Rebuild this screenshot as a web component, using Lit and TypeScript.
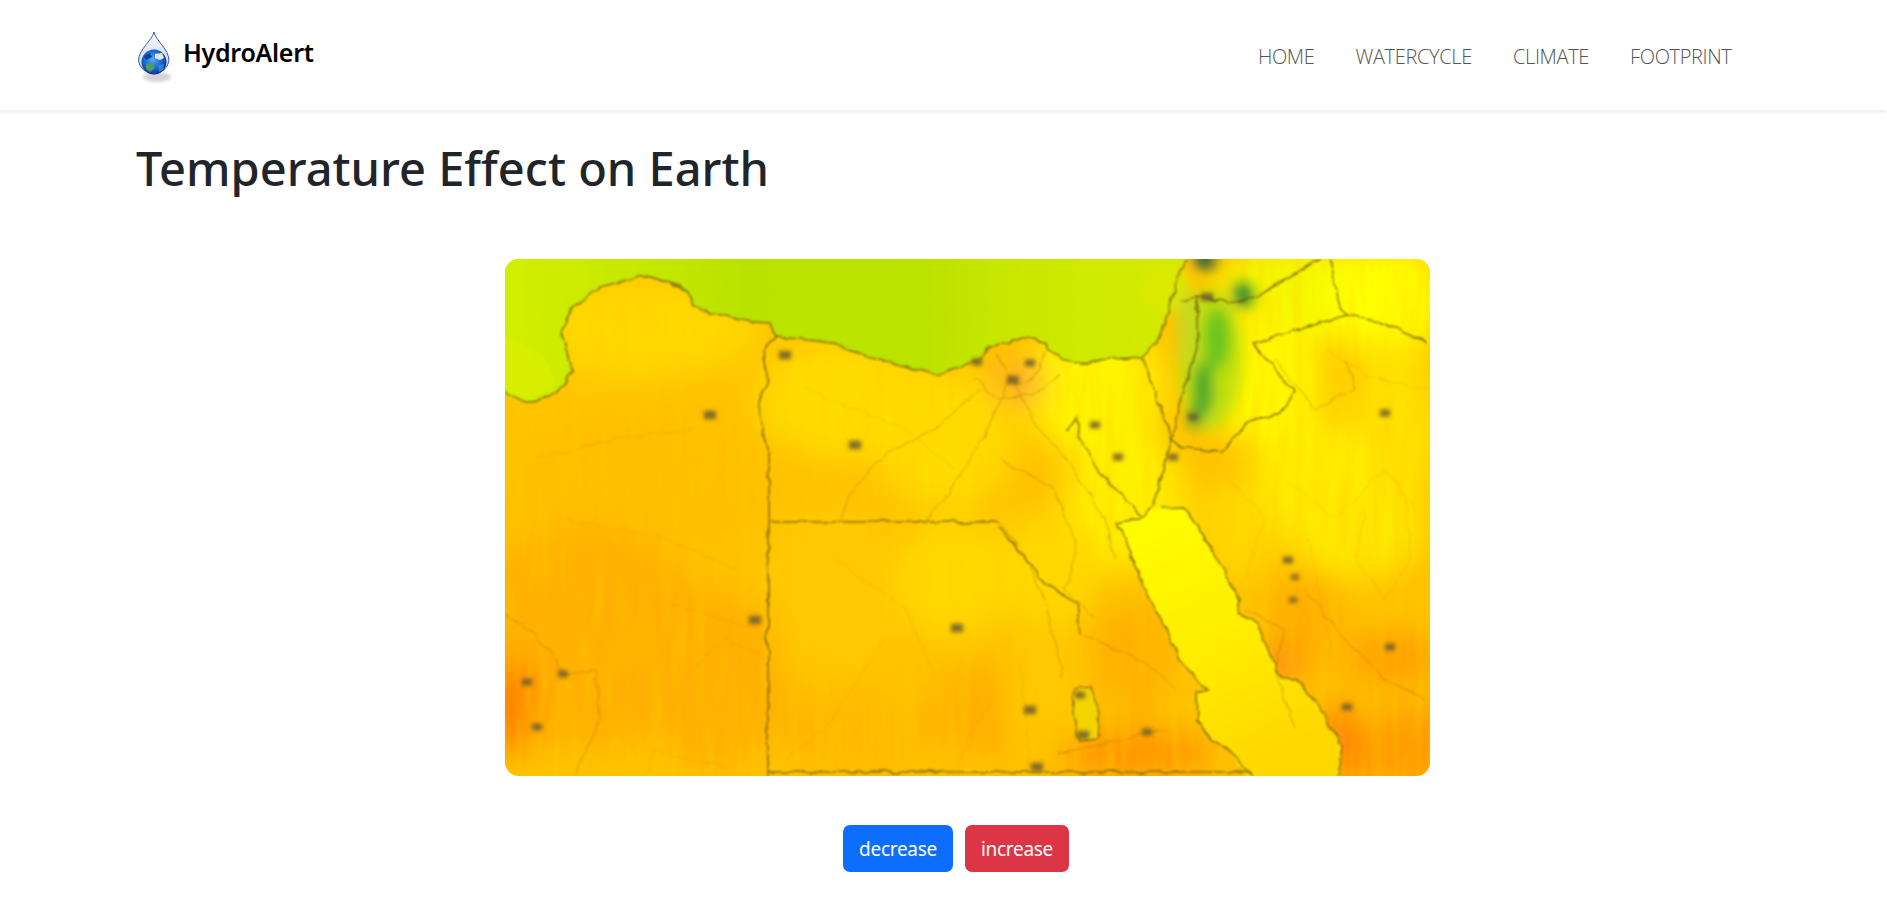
import { LitElement, html, css, svg } from 'lit';
import { customElement } from 'lit/decorators.js';

// soft colour patches of the temperature map: cx, cy, rx, ry, colour
const HEAT: [number, number, number, number, string][] = [
  [130, 70, 130, 50, '#ffd800'],
  [60, 150, 70, 40, '#ffc400'],
  [130, 230, 130, 70, '#ffbe00'],
  [80, 380, 130, 110, '#ffb000'],
  [210, 420, 70, 90, '#ffb000'],
  [340, 140, 90, 60, '#ffdc00'],
  [440, 180, 70, 70, '#ffdc00'],
  [330, 330, 70, 90, '#ffc800'],
  [450, 320, 60, 60, '#ffd800'],
  [350, 470, 90, 40, '#ffb800'],
  [480, 450, 50, 50, '#ffb000'],
  [590, 130, 70, 70, '#fff400'],
  [620, 240, 60, 70, '#fff000'],
  [545, 310, 50, 60, '#ffd800'],
  [540, 430, 40, 70, '#ffc800'],
  [625, 400, 40, 60, '#ffb000'],
  [630, 495, 80, 24, '#ff9400'],
  [800, 30, 90, 50, '#f4f800'],
  [880, 40, 60, 60, '#ffff00'],
  [760, 120, 60, 70, '#fff800'],
  [890, 170, 50, 90, '#ffe000'],
  [810, 220, 60, 60, '#ffee00'],
  [730, 270, 40, 50, '#ffd800'],
  [850, 270, 70, 50, '#ffe800'],
  [800, 360, 36, 50, '#ffac00'],
  [890, 400, 50, 28, '#ffa000'],
  [770, 410, 26, 26, '#ff9410'],
  [860, 490, 70, 36, '#ff9c00'],
  [835, 485, 12, 46, '#ff7a10'],
  [922, 490, 30, 50, '#ff9c00'],
  [515, 125, 26, 20, '#ffa030'],
  [8, 450, 22, 46, '#ff7a00'],
  [20, 420, 14, 16, '#ff8410'],
];

const GREENS: [number, number, number, number, string][] = [
  [705, 100, 32, 70, '#c0e010'],
  [712, 80, 13, 32, '#68c41e'],
  [698, 130, 10, 28, '#3ba52c'],
  [690, 158, 7, 12, '#4e9a34'],
  [738, 36, 10, 12, '#18803c'],
  [700, 1, 11, 9, '#03464e'],
  [660, 30, 26, 24, '#dce800'],
  [682, 70, 10, 40, '#c8d820'],
];

// coast and border lines, local to the 925x517 map
const BORDERS = [
  'M0 133 L14 140 28 143 52 134 67 114 63 94 57 71 68 48 95 28 122 21 138 16 162 23 185 34 188 48 208 54 245 63 265 64 270 78 295 80 328 84 362 98 395 106 432 116 452 108 475 101 482 89 508 81 528 79 542 86 558 101 575 106 592 101 638 98 652 84 662 58 675 11 682 0',
  'M270 78 L257 94 263 121 252 148 263 188 263 517',
  'M265 263 L494 263',
  'M263 513 L746 513',
  'M638 98 L667 181 648 248 638 258',
  'M692 38 L692 88 678 134 667 181 675 188 715 193 742 164 775 154 790 133 748 84 842 56 875 63 922 84',
  'M675 41 L692 38 732 44 758 34 815 0',
  'M825 0 L835 48 842 56',
  'M563 173 L572 158 575 178 598 218 638 258 612 264 628 301 635 321 662 371 675 401 702 431 692 434 693 461 705 481 722 488 748 517',
  'M655 249 L678 248 688 261 708 294 735 341 732 354 752 364 762 388 772 414 795 424 815 448 837 488 832 517',
  'M495 268 L545 328 572 344 575 374',
];

const RIVERS = [
  'M492 95 L510 125 528 120 542 90',
  'M470 118 L490 140 530 135 556 115',
  'M510 125 L530 165 560 200 575 220 600 260 610 300',
  'M475 130 L430 170 380 195 345 235 335 262',
  'M505 118 L480 175 440 240 420 262',
  'M495 200 L550 230 572 290 560 330 590 360',
  'M494 263 L520 295 540 340 558 420',
  'M0 355 L28 372 50 400 58 415 90 412 95 460 70 517',
  'M575 374 L642 404 672 431',
  'M552 495 L620 480 662 470',
  'M800 330 L840 380 880 420 920 440',
  'M740 350 L780 370 770 410 790 470',
  'M840 100 L850 130 810 150 770 100',
];

const CONTOURS = [
  'M30 200 L110 180 190 170',
  'M60 260 L160 280 230 310',
  'M150 340 L250 370',
  'M180 420 L220 380 260 400',
  'M140 517 L150 490 180 500 210 505 225 510',
  'M300 130 L400 170 450 210',
  'M330 300 L400 350 430 420',
  'M380 380 L320 470 280 500',
  'M450 517 L468 470 488 440',
  'M515 405 L520 450 524 510',
  'M780 220 L830 260 880 210 910 250',
  'M720 215 L760 260 740 320',
  'M820 90 L870 120 920 130',
  'M805 280 L815 340 828 400',
  'M900 240 L905 300 880 340 850 300 860 250',
];

const CITIES: [number, number, number][] = [
  [280, 96, 6], [205, 156, 6], [350, 186, 6], [472, 103, 5], [508, 121, 6], [525, 104, 5],
  [702, 38, 6], [590, 166, 5], [613, 198, 5], [668, 198, 5], [880, 154, 5], [688, 158, 5],
  [250, 361, 6], [452, 369, 6], [58, 415, 5], [22, 423, 5], [32, 468, 5], [783, 301, 5],
  [790, 318, 4], [788, 341, 4], [885, 388, 5], [842, 448, 5], [575, 436, 5], [525, 451, 6],
  [578, 476, 6], [642, 473, 5], [532, 508, 6],
];

@customElement('temp-map')
export class TempMap extends LitElement {
  static override styles = css`
    :host { display: block; width: 925px; height: 517px; }
    svg { display: block; border-radius: 14px; }
    .border { fill: none; stroke: #6a5a00; stroke-width: 1.5; stroke-linejoin: round; opacity: 0.8; }
    .river { fill: none; stroke: #a87400; stroke-width: 1; opacity: 0.55; }
    .contour { fill: none; stroke: #d88a00; stroke-width: 1; opacity: 0.28; }
    .lake { fill: #f4d400; stroke: #8a6a10; stroke-width: 1.4; }
    .city { fill: #6e5a30; opacity: 0.85; }
  `;

  private patch(items: [number, number, number, number, string][]) {
    return items.map(([cx, cy, rx, ry, c]) => svg`<ellipse cx=${cx} cy=${cy} rx=${rx} ry=${ry} fill=${c}></ellipse>`);
  }

  override render() {
    return html`<svg width="925" height="517" viewBox="0 0 925 517" role="img" aria-label="Temperature map">
      <defs>
        <filter id="wide" x="-20%" y="-20%" width="140%" height="140%"><feGaussianBlur stdDeviation="16"></feGaussianBlur></filter>
        <filter id="mid" x="-50%" y="-50%" width="200%" height="200%">
          <feGaussianBlur stdDeviation="7"></feGaussianBlur>
        </filter>
        <filter id="rough" x="0" y="0" width="100%" height="100%">
          <feTurbulence type="fractalNoise" baseFrequency="0.07" numOctaves="2" seed="4" result="n"></feTurbulence>
          <feDisplacementMap in="SourceGraphic" in2="n" scale="7" xChannelSelector="R" yChannelSelector="G"></feDisplacementMap>
          <feGaussianBlur stdDeviation="0.8"></feGaussianBlur>
        </filter>
        <filter id="streak" x="0" y="0" width="100%" height="100%">
          <feTurbulence type="fractalNoise" baseFrequency="0.09 0.012" numOctaves="2" seed="9"></feTurbulence>
          <feColorMatrix type="matrix" values="0 0 0 0 1  0 0 0 0 0.62  0 0 0 0 0  1.6 0 0 0 -0.62"></feColorMatrix>
        </filter>
        <filter id="dot" x="-100%" y="-100%" width="300%" height="300%"><feGaussianBlur stdDeviation="2"></feGaussianBlur></filter>
        <linearGradient id="sea" gradientUnits="userSpaceOnUse" x1="0" y1="0" x2="680" y2="0">
          <stop offset="0" stop-color="#d2ee00"></stop>
          <stop offset="0.2" stop-color="#c6e800"></stop>
          <stop offset="0.35" stop-color="#bae200"></stop>
          <stop offset="0.62" stop-color="#bce200"></stop>
          <stop offset="0.78" stop-color="#cde800"></stop>
          <stop offset="1" stop-color="#d4ea00"></stop>
        </linearGradient>
        <linearGradient id="red-sea" x1="0" y1="0" x2="0.4" y2="1">
          <stop offset="0" stop-color="#ffff00"></stop>
          <stop offset="0.5" stop-color="#fff000"></stop>
          <stop offset="1" stop-color="#ffd800"></stop>
        </linearGradient>
      </defs>
      <rect width="925" height="517" fill="#ffc200"></rect>
      <g filter="url(#wide)">${this.patch(HEAT)}</g>
      <rect width="925" height="517" filter="url(#streak)" opacity="0.45"></rect>
      <g filter="url(#rough)">
        <path fill="url(#sea)" d="M-10 -10 L690 -10 682 0 675 11 662 58 652 84 638 98 592 101 575 106 558 101 542 86 528 79 508 81 482 89 475 101 452 108 432 116 395 106 362 98 328 84 295 80 270 78 265 64 245 63 208 54 188 48 185 34 162 23 138 16 122 21 95 28 68 48 57 71 63 94 67 114 52 134 28 143 14 140 -10 133 Z"></path>
        <path fill="#dcf000" opacity="0.7" d="M-10 70 L40 100 50 125 25 138 -10 128 Z"></path>
        <path fill="url(#red-sea)" d="M638 258 L655 249 678 248 688 261 708 294 735 341 732 354 752 364 762 388 772 414 795 424 815 448 837 488 832 527 748 527 722 488 705 481 693 461 692 434 702 431 675 401 662 371 635 321 628 301 612 264 Z"></path>
        <path class="lake" d="M570 430 L586 428 594 450 592 480 574 482 568 455 Z"></path>
      </g>
      <g filter="url(#mid)">${this.patch(GREENS)}</g>
      <g filter="url(#rough)">
        ${CONTOURS.map((d) => svg`<path class="contour" d=${d}></path>`)}
        ${RIVERS.map((d) => svg`<path class="river" d=${d}></path>`)}
        ${BORDERS.map((d) => svg`<path class="border" d=${d}></path>`)}
      </g>
      <g filter="url(#dot)">
        ${CITIES.map(([x, y, r]) => svg`<rect class="city" x=${x - r} y=${y - r * 0.7} width=${r * 2} height=${r * 1.4}></rect>`)}
      </g>
    </svg>`;
  }
}

@customElement('app-root')
export class AppRoot extends LitElement {
  static override styles = css`
    :host {
      display: block;
      min-height: 912px;
      background: #fff;
      font-family: 'Noto Sans', 'Open Sans', sans-serif;
    }

    header {
      height: 110px;
      display: flex;
      align-items: center;
      justify-content: space-between;
      padding: 0 135px 0 138px;
      box-shadow: 0 2px 4px rgba(0, 0, 0, 0.08);
    }

    .brand {
      display: flex;
      align-items: center;
      gap: 10px;
      color: #000;
      font-size: 25px;
      font-weight: 600;
      letter-spacing: -0.3px;
      margin-top: -7px;
    }

    .brand svg { display: block; margin-top: 12px; }

    nav { display: flex; }

    nav a {
      padding: 0 20.5px;
      color: #555;
      font-family: 'Open Sans', sans-serif;
      font-size: 20px;
      font-weight: 300;
      letter-spacing: -0.35px;
      margin-top: 2px;
    }

    main { padding: 0 136px; }

    h1 {
      margin: 26px 0 0;
      height: 64px;
      line-height: 64px;
      color: #212529;
      font-size: 47px;
      font-weight: 500;
      letter-spacing: 0;
    }

    .map { margin: 59px 0 0 369px; }

    .actions {
      display: flex;
      gap: 12px;
      margin: 49px 0 0 707px;
    }

    button {
      height: 47px;
      padding: 0;
      border: 0;
      border-radius: 7px;
      color: #fff;
      font: 400 19px 'Noto Sans', 'Open Sans', sans-serif;
      letter-spacing: -0.3px;
    }

    .decrease { width: 110px; background: #0d6efd; }
    .increase { width: 104px; background: #dc3545; }
  `;

  override render() {
    return html`
      <header>
        <div class="brand">
          <svg width="35" height="54" viewBox="0 0 35 54" aria-hidden="true">
            <defs>
              <radialGradient id="globe" cx="0.45" cy="0.4" r="0.65">
                <stop offset="0" stop-color="#5aa8ee"></stop>
                <stop offset="0.6" stop-color="#1462c8"></stop>
                <stop offset="1" stop-color="#0a2a7a"></stop>
              </radialGradient>
              <linearGradient id="drop" x1="0" y1="0" x2="0" y2="1">
                <stop offset="0" stop-color="#f6f8fc"></stop>
                <stop offset="1" stop-color="#c4d4ee"></stop>
              </linearGradient>
              <filter id="shade" x="-30%" y="-60%" width="160%" height="220%"><feGaussianBlur stdDeviation="1.8"></feGaussianBlur></filter>
              <filter id="fuzz"><feGaussianBlur stdDeviation="0.5"></feGaussianBlur></filter>
            </defs>
            <ellipse cx="19" cy="46" rx="14" ry="5" fill="#d4d4d4" filter="url(#shade)"></ellipse>
            <g filter="url(#fuzz)">
              <path d="M16 1 C18 10 31 18 31 30 A15.5 15.5 0 0 1 0.5 30 C0.5 18 14 10 16 1 Z" fill="url(#drop)" stroke="#3f5a9c" stroke-width="1"></path>
              <circle cx="16" cy="31" r="12.5" fill="url(#globe)"></circle>
              <path d="M8 33 L14 32 17 37 12 41 8 38 Z" fill="#4f9a6a"></path>
              <path d="M17 23 L24 22 26 27 22 29 17 27 Z" fill="#e8e6e0"></path>
              <path d="M6 25 L12 22 14 26 8 29 Z" fill="#0e3f8e"></path>
              <path d="M20 34 L26 33 25 39 21 41 Z" fill="#2f7fd8"></path>
            </g>
          </svg>
          <span>HydroAlert</span>
        </div>
        <nav>
          <a>HOME</a>
          <a>WATERCYCLE</a>
          <a>CLIMATE</a>
          <a>FOOTPRINT</a>
        </nav>
      </header>
      <main>
        <h1>Temperature Effect on Earth</h1>
        <temp-map class="map"></temp-map>
        <div class="actions">
          <button class="decrease">decrease</button>
          <button class="increase">increase</button>
        </div>
      </main>
    `;
  }
}
